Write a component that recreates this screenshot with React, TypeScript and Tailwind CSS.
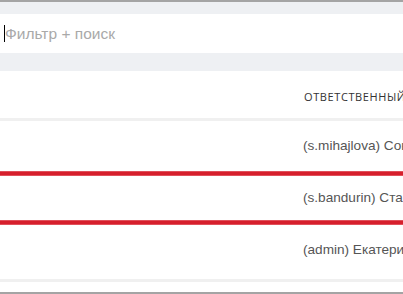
export default function App() {
  const rows = [
    { id: 1, text: "(s.mihajlova) Соколова Мария", h: "h-[50px]" },
    { id: 2, text: "(s.bandurin) Станислав Бандурин", h: "h-[44px]" },
    { id: 3, text: "(admin) Екатерина Иванова", h: "h-[54px]" },
  ];

  return (
    <div className="w-[403px] h-[294px] overflow-hidden bg-white font-['Liberation_Sans',Arial,sans-serif]">
      <div className="h-[2px] bg-[#a4a4a4]" />

      {/* filter bar */}
      <div className="bg-[#eef0f3] pt-[12px] pb-[18px]">
        <div className="h-[39px] bg-white flex items-center pl-[4px]">
          <span className="w-px h-[17px] bg-black" />
          <span className="text-[15.5px] text-[#a9a9a9] leading-none">Фильтр + поиск</span>
        </div>
      </div>

      {/* header */}
      <div className="h-[47px] flex items-center pt-[5px]">
        <div className="w-[304px] shrink-0" />
        <div className="whitespace-nowrap font-['Open_Sans',sans-serif] text-[11px] uppercase tracking-[0.6px] text-[#333]">
          Ответственный
        </div>
      </div>
      <div className="h-[3px] bg-[#f0f0f0]" />

      {rows.map((r, i) => (
        <div key={r.id}>
          <div className={`${r.h} flex items-center ${i === 2 ? "pb-[4px]" : ""}`}>
            <div className="w-[303px] shrink-0" />
            <div className="whitespace-nowrap text-[13.6px] text-[#555]">{r.text}</div>
          </div>
          {i < 2 && <div className="h-[5px] bg-[#d61f2c] border-y border-[#e0505a]" />}
        </div>
      ))}

      <div className="h-[3px] bg-[#f0f0f0]" />
      <div className="h-[10px]" />
      <div className="h-[2px] bg-[#a4a4a4]" />
    </div>
  );
}
